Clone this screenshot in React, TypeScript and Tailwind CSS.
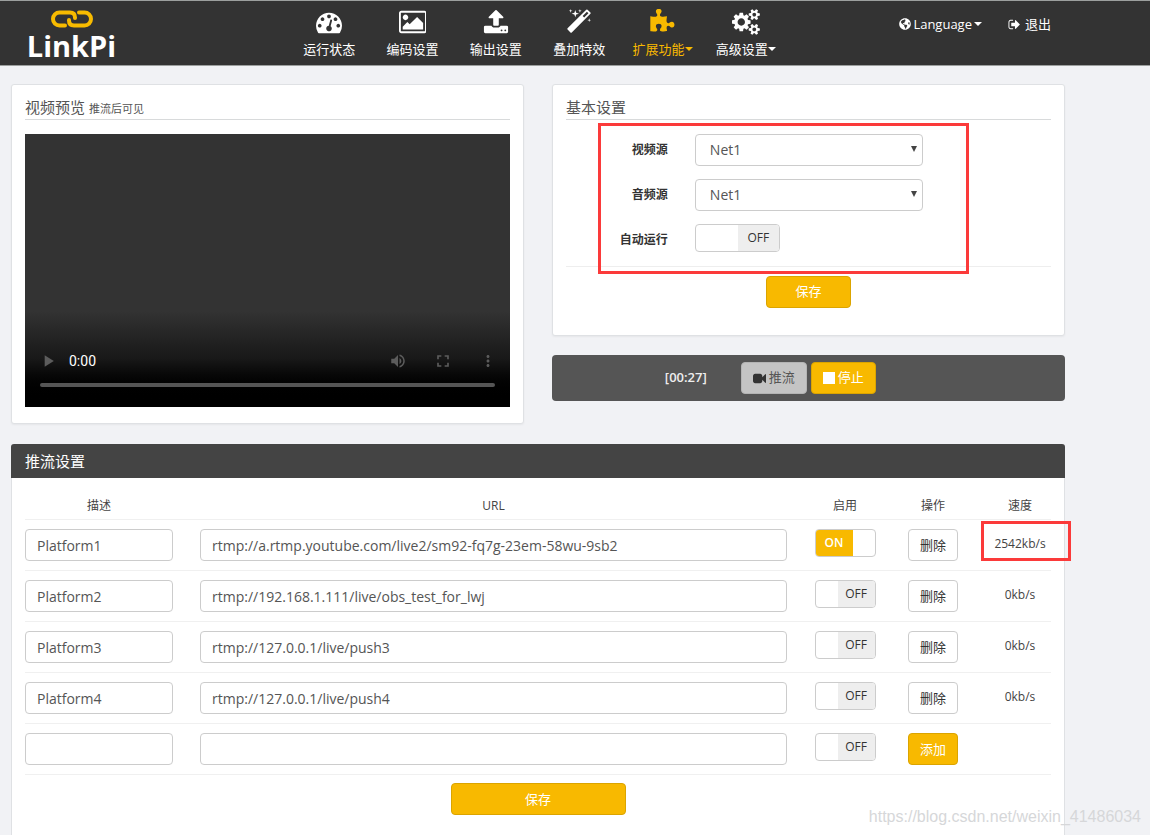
import { useState } from 'react'
import type { ReactNode } from 'react'
import { FaGlobeAmericas } from 'react-icons/fa'
import { MdFullscreen, MdMoreVert, MdPlayArrow, MdVolumeUp } from 'react-icons/md'

interface NavItem {
  label: string
  viewBox: string
  path: string
  active?: boolean
  menu?: boolean
}

interface Platform {
  id: number
  name: string
  url: string
  enabled: boolean
  speed: string
  marked?: boolean
}

const navItems: NavItem[] = [
  {
    label: '运行状态',
    viewBox: '0 0 1792 1792',
    path: 'M384 1152q0-53-37.5-90.5t-90.5-37.5-90.5 37.5-37.5 90.5 37.5 90.5 90.5 37.5 90.5-37.5 37.5-90.5zm192-448q0-53-37.5-90.5t-90.5-37.5-90.5 37.5-37.5 90.5 37.5 90.5 90.5 37.5 90.5-37.5 37.5-90.5zm428 481l101-382q6-26-7.5-48.5t-38.5-29.5-48 6.5-30 39.5l-101 382q-60 5-107 43.5t-63 98.5q-20 77 20 146t117 89 146-20 89-117q16-60-6-117t-72-91zm660-33q0-53-37.5-90.5t-90.5-37.5-90.5 37.5-37.5 90.5 37.5 90.5 90.5 37.5 90.5-37.5 37.5-90.5zm-640-640q0-53-37.5-90.5t-90.5-37.5-90.5 37.5-37.5 90.5 37.5 90.5 90.5 37.5 90.5-37.5 37.5-90.5zm448 192q0-53-37.5-90.5t-90.5-37.5-90.5 37.5-37.5 90.5 37.5 90.5 90.5 37.5 90.5-37.5 37.5-90.5zm320 448q0 261-141 483-19 29-54 29h-1402q-35 0-54-29-141-221-141-483 0-182 71-348t191-286 286-191 348-71 348 71 286 191 191 286 71 348z',
  },
  {
    label: '编码设置',
    viewBox: '0 0 1920 1792',
    path: 'M640 576q0 80-56 136t-136 56-136-56-56-136 56-136 136-56 136 56 56 136zm1024 384v448h-1408v-192l320-320 160 160 512-512zm96-704h-1600q-13 0-22.5 9.5t-9.5 22.5v1216q0 13 9.5 22.5t22.5 9.5h1600q13 0 22.5-9.5t9.5-22.5v-1216q0-13-9.5-22.5t-22.5-9.5zm160 32v1216q0 66-47 113t-113 47h-1600q-66 0-113-47t-47-113v-1216q0-66 47-113t113-47h1600q66 0 113 47t47 113z',
  },
  {
    label: '输出设置',
    viewBox: '0 0 1792 1792',
    path: 'M1344 1472q0-26-19-45t-45-19-45 19-19 45 19 45 45 19 45-19 19-45zm256 0q0-26-19-45t-45-19-45 19-19 45 19 45 45 19 45-19 19-45zm128-224v320q0 40-28 68t-68 28h-1472q-40 0-68-28t-28-68v-320q0-40 28-68t68-28h427q21 56 70.5 92t110.5 36h256q61 0 110.5-36t70.5-92h427q40 0 68 28t28 68zm-325-648q-17 40-59 40h-256v448q0 26-19 45t-45 19h-256q-26 0-45-19t-19-45v-448h-256q-42 0-59-40-17-39 14-69l448-448q18-19 45-19t45 19l448 448q31 30 14 69z',
  },
  {
    label: '叠加特效',
    viewBox: '0 0 1792 1792',
    path: 'M1254 581l293-293-107-107-293 293zm447-293q0 27-18 45l-1286 1286q-18 18-45 18t-45-18l-198-198q-18-18-18-45t18-45l1286-1286q18-18 45-18t45 18l198 198q18 18 18 45zm-1351-190l98 30-98 30-30 98-30-98-98-30 98-30 30-98zm350 162l196 60-196 60-60 196-60-196-196-60 196-60 60-196zm930 478l98 30-98 30-30 98-30-98-98-30 98-30 30-98zm-640-640l98 30-98 30-30 98-30-98-98-30 98-30 30-98z',
  },
  {
    label: '扩展功能',
    viewBox: '0 0 1792 1792',
    active: true,
    menu: true,
    path: 'M1755 1083q0 81-44.5 135t-123.5 54q-41 0-77.5-17.5t-59-38-56.5-38-71-17.5q-110 0-110 124 0 39 16 115t15 115v5q-22 0-33 1-34 3-97.5 11.5t-115.5 13.5-98 5q-61 0-103-26.5t-42-83.5q0-37 17.5-71t38-56.5 38-59 17.5-77.5q0-79-54-123.5t-135-44.5q-84 0-143 45.5t-59 127.5q0 43 15 83t33.5 64.5 33.5 53 15 50.5q0 45-46 89-37 35-117 35-95 0-245-24-9-2-27.5-4t-27.5-4l-13-2q-1 0-3-1-2 0-2-1v-1024q2 1 17.5 3.5t34 5 21.5 3.5q150 24 245 24 80 0 117-35 46-44 46-89 0-22-15-50.5t-33.5-53-33.5-64.5-15-83q0-82 59-127.5t144-45.5q80 0 134 44.5t54 123.5q0 41-17.5 77.5t-38 59-38 56.5-17.5 71q0 57 42 83.5t103 26.5q64 0 180-15t163-17v2q-1 2-3.5 17.5t-5 34-3.5 21.5q-24 150-24 245 0 80 35 117 44 46 89 46 22 0 50.5-15t53-33.5 64.5-33.5 83-15q82 0 127.5 59t45.5 143z',
  },
  {
    label: '高级设置',
    viewBox: '0 0 1920 1792',
    menu: true,
    path: 'M896 896q0-106-75-181t-181-75-181 75-75 181 75 181 181 75 181-75 75-181zm768 512q0-52-38-90t-90-38-90 38-38 90q0 53 37.5 90.5t90.5 37.5 90.5-37.5 37.5-90.5zm0-1024q0-52-38-90t-90-38-90 38-38 90q0 53 37.5 90.5t90.5 37.5 90.5-37.5 37.5-90.5zm-384 421v185q0 10-7 19.5t-16 10.5l-155 24q-11 35-32 76 34 48 90 115 7 11 7 20 0 12-7 19-23 30-82.5 89.5t-78.5 59.5q-11 0-21-7l-115-90q-37 19-77 31-11 108-23 155-7 24-30 24h-186q-11 0-20-7.5t-10-17.5l-23-153q-34-10-75-31l-118 89q-7 7-20 7-11 0-21-8-144-133-144-160 0-9 7-19 10-14 41-53t47-61q-23-44-35-82l-152-24q-10-1-17-9.5t-7-19.5v-185q0-10 7-19.5t16-10.5l155-24q11-35 32-76-34-48-90-115-7-11-7-20 0-12 7-20 22-30 82-89t79-59q11 0 21 7l115 90q34-18 77-32 11-108 23-154 7-24 30-24h186q11 0 20 7.5t10 17.5l23 153q34 10 75 31l118-89q8-7 20-7 11 0 21 8 144 133 144 160 0 8-7 19-12 16-42 54t-45 60q23 48 34 82l152 23q10 2 17 10.5t7 19.5zm640 533v140q0 16-149 31-12 27-30 52 51 113 51 138 0 4-4 7-122 71-124 71-8 0-46-47t-52-68q-20 2-30 2t-30-2q-14 21-52 68t-46 47q-2 0-124-71-4-3-4-7 0-25 51-138-18-25-30-52-149-15-149-31v-140q0-16 149-31 13-29 30-52-51-113-51-138 0-4 4-7 4-2 35-20t59-34 30-16q8 0 46 46.5t52 67.5q20-2 30-2t30 2q51-71 92-112l6-2q4 0 124 70 4 3 4 7 0 25-51 138 17 23 30 52 149 15 149 31zm0-1024v140q0 16-149 31-12 27-30 52 51 113 51 138 0 4-4 7-122 71-124 71-8 0-46-47t-52-68q-20 2-30 2t-30-2q-14 21-52 68t-46 47q-2 0-124-71-4-3-4-7 0-25 51-138-18-25-30-52-149-15-149-31v-140q0-16 149-31 13-29 30-52-51-113-51-138 0-4 4-7 4-2 35-20t59-34 30-16q8 0 46 46.5t52 67.5q20-2 30-2t30 2q51-71 92-112l6-2q4 0 124 70 4 3 4 7 0 25-51 138 17 23 30 52 149 15 149 31z',
  },
]

const signOutPath =
  'M704 1440q0 4 1 20t.5 26.5-3 23.5-10 19.5-20.5 6.5h-320q-119 0-203.5-84.5t-84.5-203.5v-704q0-119 84.5-203.5t203.5-84.5h320q13 0 22.5 9.5t9.5 22.5q0 4 1 20t.5 26.5-3 23.5-10 19.5-20.5 6.5h-320q-66 0-113 47t-47 113v704q0 66 47 113t113 47h312l11.5 1 11.5 3 8 5.5 7 9 2 13.5zm928-544q0 26-19 45l-544 544q-19 19-45 19t-45-19-19-45v-288h-448q-26 0-45-19t-19-45v-384q0-26 19-45t45-19h448v-288q0-26 19-45t45-19 45 19l544 544q19 19 19 45z'

const cameraPath =
  'M1792 352v1088q0 42-39 59-13 5-25 5-27 0-45-19l-403-403v166q0 119-84.5 203.5t-203.5 84.5h-704q-119 0-203.5-84.5t-84.5-203.5v-704q0-119 84.5-203.5t203.5-84.5h704q119 0 203.5 84.5t84.5 203.5v165l403-402q18-19 45-19 12 0 25 5 39 17 39 59z'

const initialPlatforms: Platform[] = [
  {
    id: 1,
    name: 'Platform1',
    url: 'rtmp://a.rtmp.youtube.com/live2/sm92-fq7g-23em-58wu-9sb2',
    enabled: true,
    speed: '2542kb/s',
    marked: true,
  },
  { id: 2, name: 'Platform2', url: 'rtmp://192.168.1.111/live/obs_test_for_lwj', enabled: false, speed: '0kb/s' },
  { id: 3, name: 'Platform3', url: 'rtmp://127.0.0.1/live/push3', enabled: false, speed: '0kb/s' },
  { id: 4, name: 'Platform4', url: 'rtmp://127.0.0.1/live/push4', enabled: false, speed: '0kb/s' },
]

const fieldClass =
  'h-8 w-full rounded border border-[#ccc] bg-white px-[11px] text-sm text-[#555] outline-none focus:border-[#f8b900]'

function Caret() {
  return (
    <svg viewBox="0 0 8 4" className="h-1 w-2 fill-current" aria-hidden="true">
      <path d="M0 0h8L4 4z" />
    </svg>
  )
}

function Logo() {
  return (
    <a href="#" className="flex w-[87px] flex-col items-center text-white">
      <svg viewBox="0 0 42 18" className="h-[18px] w-[42px]" fill="none" stroke="#f8bb00" strokeWidth="4" aria-hidden="true">
        <path d="M14 15.500H8.500a6.500 6.500 0 0 1 0-13H19q5 0 5 5v.5" strokeLinecap="round" />
        <path d="M28 2.500h5.500a6.500 6.500 0 0 1 0 13H23q-5 0-5-5V10" strokeLinecap="round" />
      </svg>
      <span className="text-[29px] leading-[36px] font-bold">LinkPi</span>
    </a>
  )
}

function Header() {
  return (
    <header className="flex h-[66px] items-start border-t border-b border-[#9c9f9e] bg-[#333] text-white">
      <div className="w-1/4 pt-[9px] pl-7">
        <Logo />
      </div>
      <nav className="grid w-[500px] grid-cols-6 pt-2">
        {navItems.map((item) => (
          <a
            key={item.label}
            href="#"
            className={`flex flex-col items-center ${item.active ? 'text-[#f8b900]' : 'text-white'}`}
          >
            <svg viewBox={item.viewBox} className="h-[26px] fill-current" aria-hidden="true">
              <path d={item.path} />
            </svg>
            <span className="mt-1 flex items-center text-[13px] leading-5 whitespace-nowrap">
              {item.label}
              {item.menu && <Caret />}
            </span>
          </a>
        ))}
      </nav>
      <div className="ml-auto flex gap-[26px] pt-[13px] pr-[99px] text-[13px] leading-5">
        <button type="button" className="flex items-center gap-0.5">
          <FaGlobeAmericas className="h-3 w-3" />
          <span>Language</span>
          <Caret />
        </button>
        <a href="#" className="flex items-center gap-1">
          <svg viewBox="0 0 1792 1792" className="h-[13px] w-[13px] fill-current" aria-hidden="true">
            <path d={signOutPath} />
          </svg>
          退出
        </a>
      </div>
    </header>
  )
}

function Card({ title, note, children }: { title: string; note?: string; children: ReactNode }) {
  return (
    <section className="rounded-[3px] border border-[#dfe1e4] bg-white px-[13px] pt-3 shadow-xs">
      <h2 className="flex items-baseline gap-1 border-b border-[#d8dadb] pb-0.5 text-[15px] leading-5 text-[#555]">
        {title}
        {note && <small className="text-[11px] leading-none">{note}</small>}
      </h2>
      {children}
    </section>
  )
}

interface SwitchProps {
  label: string
  checked: boolean
  onChange: (checked: boolean) => void
  wide?: boolean
}

function Switch({ label, checked, onChange, wide }: SwitchProps) {
  return (
    <label
      className={`inline-flex h-7 cursor-pointer overflow-hidden rounded border border-[#ccc] bg-white text-xs leading-[26px] ${
        wide ? 'w-[85px]' : 'w-[61px]'
      } ${checked ? 'flex-row-reverse' : ''}`}
    >
      <input
        type="checkbox"
        className="sr-only"
        aria-label={label}
        checked={checked}
        onChange={(e) => onChange(e.target.checked)}
      />
      <span className={wide ? 'w-[42px]' : 'w-[22px]'} />
      <span className={`flex-1 text-center ${checked ? 'bg-[#f8b900] font-semibold text-white' : 'bg-[#eee] text-[#333]'}`}>
        {checked ? 'ON' : 'OFF'}
      </span>
    </label>
  )
}

function VideoPreview() {
  return (
    <div className="mt-[14px] mb-4 flex aspect-video flex-col justify-end bg-[#333]">
      <div className="bg-linear-to-t from-black from-5% via-[#181818] via-50% to-[#333] px-[15px] pt-10 pb-5 text-[#5c5c5c]">
        <div className="flex items-center">
          <button type="button" aria-label="play" className="-ml-0.5">
            <MdPlayArrow className="h-5 w-5" />
          </button>
          <span className="ml-[11px] font-[Roboto] text-sm text-white">0:00</span>
          <div className="-mr-0.5 ml-auto flex gap-[26px]">
            <button type="button" aria-label="mute">
              <MdVolumeUp className="h-[18px] w-[18px]" />
            </button>
            <button type="button" aria-label="full screen">
              <MdFullscreen className="h-5 w-5" />
            </button>
            <button type="button" aria-label="more">
              <MdMoreVert className="h-[18px] w-[18px]" />
            </button>
          </div>
        </div>
        <input
          type="range"
          aria-label="position"
          defaultValue={0}
          className="mt-3 block h-1 w-full appearance-none rounded-full bg-[#555] [&::-webkit-slider-thumb]:w-0 [&::-webkit-slider-thumb]:appearance-none"
        />
      </div>
    </div>
  )
}

function SourceSelect({ id, label }: { id: string; label: string }) {
  return (
    <div className="flex items-start">
      <label htmlFor={id} className="w-[21%] pt-[5px] text-right text-xs leading-[22px] font-bold text-[#333]">
        {label}
      </label>
      <div className="relative ml-[27px] w-[47%]">
        <select
          id={id}
          className="h-8 w-full appearance-none rounded border border-[#ccc] bg-white pl-[14px] text-sm text-[#555] outline-none"
        >
          <option>Net1</option>
        </select>
        <svg
          viewBox="0 0 6 6"
          className="pointer-events-none absolute top-3 right-[6px] h-[6px] w-[6px] fill-[#444]"
          aria-hidden="true"
        >
          <path d="M0 0h6L3 6z" />
        </svg>
      </div>
    </div>
  )
}

function BasicSettings() {
  const [autoRun, setAutoRun] = useState(false)

  return (
    <Card title="基本设置">
      <form className="relative" onSubmit={(e) => e.preventDefault()}>
        <div className="flex flex-col gap-[13px] border-b border-[#eee] py-[14px]">
          <SourceSelect id="video-source" label="视频源" />
          <SourceSelect id="audio-source" label="音频源" />
          <div className="flex items-start">
            <span className="w-[21%] pt-[5px] text-right text-xs leading-[22px] font-bold text-[#333]">自动运行</span>
            <div className="ml-[27px] flex">
              <Switch label="自动运行" checked={autoRun} onChange={setAutoRun} wide />
            </div>
          </div>
        </div>
        <div className="flex justify-center pt-[9px] pb-[27px]">
          <button
            type="submit"
            className="h-8 w-[85px] rounded border border-[#dba400] bg-[#f8b900] text-[13px] text-white"
          >
            保存
          </button>
        </div>
        <div className="pointer-events-none absolute top-[3px] right-[17%] left-8 h-[151px] border-3 border-[#fb3a3a]" />
      </form>
    </Card>
  )
}

function StatusBar() {
  return (
    <div className="mt-[19px] flex h-[46px] items-center rounded bg-[#555] pl-[22%] text-[13px]">
      <span className="mr-[34px] font-semibold text-[#eee]">[00:27]</span>
      <button
        type="button"
        className="mr-1 flex h-8 w-[66px] items-center justify-center gap-[3px] rounded border border-[#b4b4b4] bg-[#c4c4c4] text-[#555]"
      >
        <svg viewBox="0 0 1792 1792" className="h-[13px] w-[13px] fill-[#333]" aria-hidden="true">
          <path d={cameraPath} />
        </svg>
        推流
      </button>
      <button
        type="button"
        className="flex h-8 w-[65px] items-center justify-center gap-[3px] rounded border border-[#dba400] bg-[#f8b900] text-white"
      >
        <span className="h-3 w-3 bg-white" />
        停止
      </button>
    </div>
  )
}

function PushSettings() {
  const [platforms, setPlatforms] = useState(initialPlatforms)
  const [draft, setDraft] = useState({ name: '', url: '', enabled: false })

  const update = (id: number, patch: Partial<Platform>) =>
    setPlatforms(platforms.map((p) => (p.id === id ? { ...p, ...patch } : p)))

  const remove = (id: number) => setPlatforms(platforms.filter((p) => p.id !== id))

  const add = () => {
    setPlatforms([...platforms, { id: Date.now(), speed: '0kb/s', ...draft }])
    setDraft({ name: '', url: '', enabled: false })
  }

  return (
    <section className="mt-5 flex-1 rounded-t-[3px] border-x border-[#dfe1e4] bg-white">
      <h2 className="-mx-px rounded-t-[3px] bg-[#444] px-[14px] text-[15px] leading-[34px] text-white">推流设置</h2>
      <div className="px-[13px] pb-5">
        <table className="w-full table-fixed text-center text-xs text-[#444]">
          <colgroup>
            <col className="w-[161px]" />
            <col />
            <col className="w-[88px]" />
            <col className="w-[88px]" />
            <col className="w-[74px]" />
          </colgroup>
          <thead>
            <tr className="h-[42px] border-b border-[#f0f0f0]">
              <th className="pt-[14px] pr-[13px] font-normal">描述</th>
              <th className="pt-[14px] font-normal">URL</th>
              <th className="pt-[14px] font-normal">启用</th>
              <th className="pt-[14px] font-normal">操作</th>
              <th className="pt-[14px] pl-3 font-normal">速度</th>
            </tr>
          </thead>
          <tbody>
            {platforms.map((p) => (
              <tr key={p.id} className="h-[51px] border-b border-[#f0f0f0] align-top">
                <td className="pt-[9px] pr-[13px]">
                  <input
                    aria-label="描述"
                    className={fieldClass}
                    value={p.name}
                    onChange={(e) => update(p.id, { name: e.target.value })}
                  />
                </td>
                <td className="px-[14px] pt-[9px]">
                  <input
                    aria-label="URL"
                    className={fieldClass}
                    value={p.url}
                    onChange={(e) => update(p.id, { url: e.target.value })}
                  />
                </td>
                <td className="pt-[9px]">
                  <Switch label="启用" checked={p.enabled} onChange={(enabled) => update(p.id, { enabled })} />
                </td>
                <td className="pt-[9px]">
                  <button
                    type="button"
                    className="h-8 w-[50px] rounded border border-[#ccc] bg-white text-[13px] text-[#333]"
                    onClick={() => remove(p.id)}
                  >
                    删除
                  </button>
                </td>
                <td className="relative pt-[9px] pl-3 leading-[30px]">
                  {p.speed}
                  {p.marked && (
                    <div className="pointer-events-none absolute top-px -right-5 left-1 h-10 border-3 border-[#fb3a3a]" />
                  )}
                </td>
              </tr>
            ))}
            <tr className="h-[51px] border-b border-[#f0f0f0] align-top">
              <td className="pt-[9px] pr-[13px]">
                <input
                  aria-label="描述"
                  className={fieldClass}
                  value={draft.name}
                  onChange={(e) => setDraft({ ...draft, name: e.target.value })}
                />
              </td>
              <td className="px-[14px] pt-[9px]">
                <input
                  aria-label="URL"
                  className={fieldClass}
                  value={draft.url}
                  onChange={(e) => setDraft({ ...draft, url: e.target.value })}
                />
              </td>
              <td className="pt-[9px]">
                <Switch label="启用" checked={draft.enabled} onChange={(enabled) => setDraft({ ...draft, enabled })} />
              </td>
              <td className="pt-[9px]">
                <button
                  type="button"
                  className="h-8 w-[50px] rounded border border-[#dba400] bg-[#f8b900] text-[13px] text-white"
                  onClick={add}
                >
                  添加
                </button>
              </td>
              <td />
            </tr>
          </tbody>
        </table>
        <div className="flex justify-center pt-2">
          <button
            type="button"
            className="h-8 w-[175px] rounded border border-[#dba400] bg-[#f8b900] text-[13px] text-white"
          >
            保存
          </button>
        </div>
      </div>
    </section>
  )
}

export default function App() {
  return (
    <div className="relative flex min-h-screen flex-col bg-[#f1f2f5] font-['Open_Sans','Noto_Sans_CJK_SC',sans-serif]">
      <Header />
      <main className="flex flex-1 flex-col pt-[18px] pr-[85px] pl-[11px]">
        <div className="grid grid-cols-2 items-start gap-7">
          <Card title="视频预览" note="推流后可见">
            <VideoPreview />
          </Card>
          <div>
            <BasicSettings />
            <StatusBar />
          </div>
        </div>
        <PushSettings />
      </main>
      <div className="pointer-events-none absolute right-[9px] bottom-[6px] font-['Liberation_Sans',sans-serif] text-base text-[#d6d7d9]">
        https://blog.csdn.net/weixin_41486034
      </div>
    </div>
  )
}
